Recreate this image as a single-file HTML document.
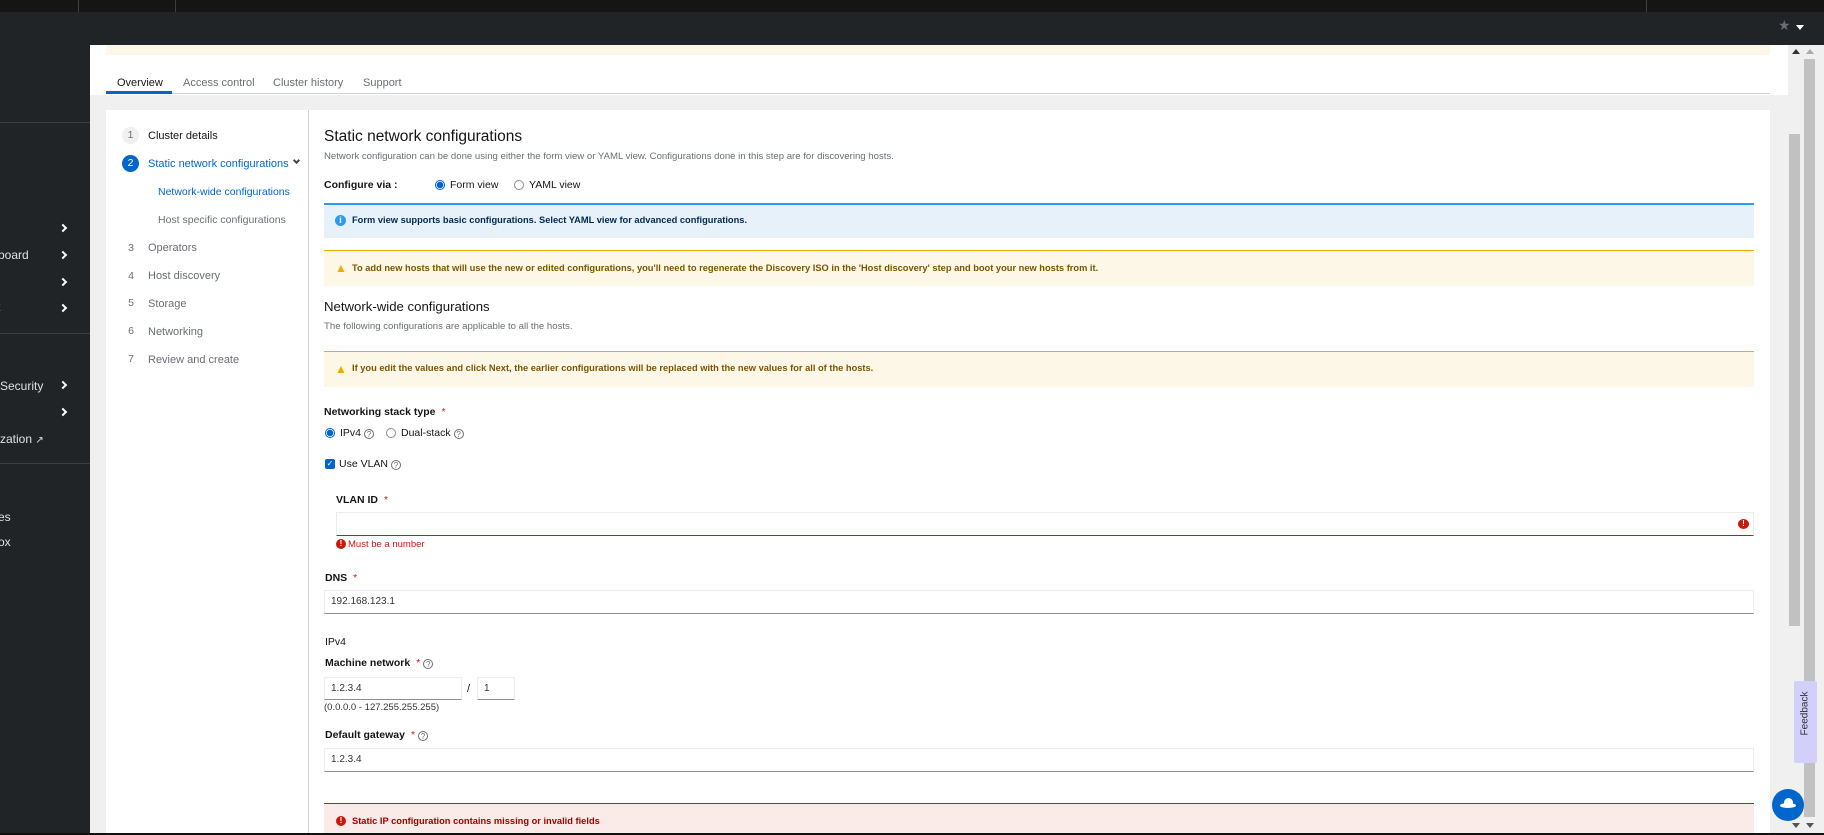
<!DOCTYPE html>
<html><head><meta charset="utf-8">
<style>
*{box-sizing:border-box;margin:0;padding:0}
body{width:1824px;height:835px;overflow:hidden;background:#f0f0f0;font-family:"Liberation Sans",sans-serif;color:#151515;position:relative;font-size:12px}
.a{position:absolute;white-space:nowrap}
.chev{position:absolute;width:6px;height:6px;border-right:2px solid #fff;border-bottom:2px solid #fff;transform:rotate(-45deg)}
.radio{position:absolute;width:10px;height:10px;border-radius:50%;border:1px solid #8a8d90;background:#fff}
.radio.on{border:1px solid #06c;background:radial-gradient(#06c 0 3px,#fff 3.5px)}
.q{display:inline-block;width:10px;height:10px;border:1px solid #6a6e73;border-radius:50%;font-size:8px;line-height:9px;text-align:center;color:#6a6e73;vertical-align:-1px;margin-left:3px;font-weight:normal}
.inp{position:absolute;background:#fff;border:1px solid #ececec;border-bottom:1px solid #8a8d90;font-size:12px;padding-left:6px}
.lbl{position:absolute;font-size:10.5px;font-weight:bold;white-space:nowrap}
.req{color:#c9190b;margin-left:6px;font-weight:normal}
.alert{position:absolute;left:324px;width:1430px}
.nn{position:absolute;left:122px;width:18px;text-align:center;color:#6a6e73;font-size:10.5px}
.nt{position:absolute;left:148px;color:#6a6e73;font-size:11px}
.at{position:absolute;left:352px;font-size:9.3px;font-weight:bold;white-space:nowrap}
</style></head><body>
<div class="a" style="left:0;top:0;width:1824px;height:12px;background:#151515"></div>
<div class="a" style="left:78px;top:0;width:1px;height:12px;background:#3c3f42"></div>
<div class="a" style="left:175px;top:0;width:1px;height:12px;background:#3c3f42"></div>
<div class="a" style="left:1646px;top:0;width:1px;height:12px;background:#3c3f42"></div>
<div class="a" style="left:0;top:12px;width:1824px;height:33px;background:#212427"></div>
<div class="a" style="left:1778px;top:17px;color:#6a6e73;font-size:14px">★</div>
<div class="a" style="left:1796px;top:25px;width:0;height:0;border-left:4px solid transparent;border-right:4px solid transparent;border-top:5px solid #fff"></div>
<div class="a" style="left:0;top:45px;width:90px;height:788px;background:#212427"></div>
<div class="a" style="left:0;top:122px;width:90px;height:1px;background:#3c3f42"></div>
<div class="a" style="left:0;top:333px;width:90px;height:1px;background:#3c3f42"></div>
<div class="a" style="left:0;top:463px;width:90px;height:1px;background:#3c3f42"></div>
<div class="chev" style="left:60px;top:225px"></div>
<div class="chev" style="left:60px;top:252px"></div>
<div class="chev" style="left:60px;top:279px"></div>
<div class="chev" style="left:60px;top:305px"></div>
<div class="chev" style="left:60px;top:382px"></div>
<div class="chev" style="left:60px;top:409px"></div>
<div class="a" style="left:-2px;top:248px;color:#e0e0e0;font-size:12px">board</div>
<div class="a" style="left:-3px;top:300px;color:#e0e0e0;font-size:12px">t</div>
<div class="a" style="left:0;top:379px;color:#e0e0e0;font-size:12px">Security</div>
<div class="a" style="left:0;top:432px;color:#e0e0e0;font-size:12px">zation <span style="font-size:10px">↗</span></div>
<div class="a" style="left:-2px;top:510px;color:#e0e0e0;font-size:12px">es</div>
<div class="a" style="left:-2px;top:535px;color:#e0e0e0;font-size:12px">ox</div>
<div class="a" style="left:90px;top:45px;width:1698px;height:50px;background:#fff"></div>
<div class="a" style="left:106px;top:45px;width:1664px;height:10px;background:#fdf7e7"></div>
<div class="a" style="left:106px;top:93px;width:1664px;height:1px;background:#d2d2d2"></div>
<div class="a" style="left:106px;top:91px;width:66px;height:3px;background:#06c"></div>
<div class="a" style="left:117px;top:77px;font-size:11px">Overview</div>
<div class="a" style="left:183px;top:77px;font-size:11px;color:#6a6e73">Access control</div>
<div class="a" style="left:273px;top:77px;font-size:11px;color:#6a6e73">Cluster history</div>
<div class="a" style="left:363px;top:77px;font-size:11px;color:#6a6e73">Support</div>
<div class="a" style="left:106px;top:110px;width:1664px;height:723px;background:#fff"></div>
<div class="a" style="left:308px;top:110px;width:1px;height:723px;background:#d2d2d2"></div>
<div class="a" style="left:122px;top:127px;width:17px;height:17px;border-radius:50%;background:#f0f0f0"></div>
<div class="nn" style="top:129px;left:122px;width:17px">1</div>
<div class="nt" style="top:130px;color:#151515">Cluster details</div>
<div class="a" style="left:122px;top:155px;width:17px;height:17px;border-radius:50%;background:#06c"></div>
<div class="nn" style="top:157px;left:122px;width:17px;color:#fff">2</div>
<div class="nt" style="top:158px;color:#06c">Static network configurations</div>
<div class="a" style="left:294px;top:158px;width:5px;height:5px;border-right:2px solid #444;border-bottom:2px solid #444;transform:rotate(45deg)"></div>
<div class="nt" style="top:186px;left:158px;color:#06c;font-size:10.5px">Network-wide configurations</div>
<div class="nt" style="top:214px;left:158px;font-size:10.5px">Host specific configurations</div>
<div class="nn" style="top:242px">3</div><div class="nt" style="top:242px">Operators</div>
<div class="nn" style="top:270px">4</div><div class="nt" style="top:270px">Host discovery</div>
<div class="nn" style="top:297px">5</div><div class="nt" style="top:298px">Storage</div>
<div class="nn" style="top:325px">6</div><div class="nt" style="top:326px">Networking</div>
<div class="nn" style="top:353px">7</div><div class="nt" style="top:354px">Review and create</div>
<div class="a" style="left:324px;top:128px;font-size:15.5px">Static network configurations</div>
<div class="a" style="left:324px;top:151px;font-size:9.6px;color:#6a6e73">Network configuration can be done using either the form view or YAML view. Configurations done in this step are for discovering hosts.</div>
<div class="lbl" style="left:324px;top:179px;font-size:10.5px">Configure via :</div>
<div class="radio on" style="left:435px;top:180px"></div>
<div class="a" style="left:450px;top:179px;font-size:10.5px">Form view</div>
<div class="radio" style="left:514px;top:180px"></div>
<div class="a" style="left:529px;top:179px;font-size:10.5px">YAML view</div>
<div class="alert" style="top:203px;height:35px;background:#e7f1fa;border-top:2px solid #2b9af3"></div>
<div class="a" style="left:335px;top:215px;width:11px;height:11px;border-radius:50%;background:#2b9af3;color:#fff;font-size:9px;text-align:center;line-height:11px;font-weight:bold">i</div>
<div class="at" style="top:215px;color:#002952">Form view supports basic configurations. Select YAML view for advanced configurations.</div>
<div class="alert" style="top:250px;height:36px;background:#fdf7e7;border-top:1px solid #f0ab00"></div>
<div class="a" style="left:335px;top:261px;color:#f0ab00;font-size:12px">▲</div>
<div class="at" style="top:263px;color:#795600">To add new hosts that will use the new or edited configurations, you'll need to regenerate the Discovery ISO in the 'Host discovery' step and boot your new hosts from it.</div>
<div class="a" style="left:324px;top:299px;font-size:13.2px">Network-wide configurations</div>
<div class="a" style="left:324px;top:321px;font-size:9.6px;color:#6a6e73">The following configurations are applicable to all the hosts.</div>
<div class="alert" style="top:351px;height:36px;background:#fdf7e7;border-top:1px solid #f0ab00"></div>
<div class="a" style="left:335px;top:362px;color:#f0ab00;font-size:12px">▲</div>
<div class="at" style="top:363px;color:#795600">If you edit the values and click Next, the earlier configurations will be replaced with the new values for all of the hosts.</div>
<div class="lbl" style="left:324px;top:406px">Networking stack type<span class="req">*</span></div>
<div class="radio on" style="left:325px;top:428px"></div>
<div class="a" style="left:340px;top:427px;font-size:10.5px">IPv4<span class="q">?</span></div>
<div class="radio" style="left:386px;top:428px"></div>
<div class="a" style="left:401px;top:427px;font-size:10.5px">Dual-stack<span class="q">?</span></div>
<div class="a" style="left:325px;top:459px;width:10px;height:10px;background:#06c;border-radius:2px;color:#fff;font-size:8px;line-height:10px;text-align:center">✓</div>
<div class="a" style="left:339px;top:458px;font-size:10.5px">Use VLAN<span class="q">?</span></div>
<div class="lbl" style="left:336px;top:494px">VLAN ID<span class="req">*</span></div>
<div class="inp" style="left:336px;top:512px;width:1418px;height:24px;border-bottom:1px solid #c9190b"></div>
<div class="a" style="left:1738px;top:519px;width:11px;height:10px;border-radius:50%;background:#c9190b;color:#fff;font-size:8px;text-align:center;line-height:10px;font-weight:bold">!</div>
<div class="a" style="left:336px;top:539px;width:10px;height:10px;border-radius:50%;background:#c9190b;color:#fff;font-size:8px;text-align:center;line-height:10px;font-weight:bold">!</div>
<div class="a" style="left:348px;top:539px;font-size:9.5px;color:#c9190b">Must be a number</div>
<div class="lbl" style="left:325px;top:572px">DNS<span class="req">*</span></div>
<div class="inp" style="left:324px;top:590px;width:1430px;height:24px;line-height:22px;font-size:10px;color:#333;border-bottom-color:#8a8d90">192.168.123.1</div>
<div class="lbl" style="left:325px;top:636px;font-weight:normal">IPv4</div>
<div class="lbl" style="left:325px;top:657px">Machine network<span class="req">*</span><span class="q">?</span></div>
<div class="inp" style="left:324px;top:677px;width:138px;height:23px;line-height:21px;font-size:10px;color:#333">1.2.3.4</div>
<div class="a" style="left:467px;top:683px;font-size:11px">/</div>
<div class="inp" style="left:477px;top:677px;width:38px;height:23px;line-height:21px;font-size:10px;color:#333">1</div>
<div class="a" style="left:324px;top:702px;font-size:9.5px;color:#333">(0.0.0.0 - 127.255.255.255)</div>
<div class="lbl" style="left:325px;top:729px">Default gateway<span class="req">*</span><span class="q">?</span></div>
<div class="inp" style="left:324px;top:748px;width:1430px;height:24px;line-height:22px;font-size:10px;color:#333">1.2.3.4</div>
<div class="alert" style="top:803px;height:30px;background:#faeae8;border-top:1px solid #c9190b"></div>
<div class="a" style="left:336px;top:816px;width:10px;height:10px;border-radius:50%;background:#c9190b;color:#fff;font-size:8px;text-align:center;line-height:10px;font-weight:bold">!</div>
<div class="at" style="top:816px;color:#a30000">Static IP configuration contains missing or invalid fields</div>
<div class="a" style="left:1771px;top:95px;width:17px;height:738px;background:#f0f0f0"></div>
<div class="a" style="left:1788px;top:45px;width:36px;height:788px;background:#f0f0f0"></div>
<div class="a" style="left:1792px;top:49px;width:0;height:0;border-left:4px solid transparent;border-right:4px solid transparent;border-bottom:5px solid #333"></div>
<div class="a" style="left:1806px;top:49px;width:0;height:0;border-left:4px solid transparent;border-right:4px solid transparent;border-bottom:5px solid #aaa"></div>
<div class="a" style="left:1789px;top:134px;width:11px;height:492px;background:#c1c1c1"></div>
<div class="a" style="left:1804px;top:59px;width:11px;height:758px;background:#c1c1c1"></div>
<div class="a" style="left:1792px;top:823px;width:0;height:0;border-left:4px solid transparent;border-right:4px solid transparent;border-top:5px solid #555"></div>
<div class="a" style="left:1806px;top:823px;width:0;height:0;border-left:4px solid transparent;border-right:4px solid transparent;border-top:5px solid #555"></div>
<div class="a" style="left:1794px;top:681px;width:23px;height:82px;background:#d2cffa;border-radius:2px"></div>
<div class="a" style="left:1778px;top:708px;width:54px;font-size:10px;color:#333;transform:rotate(-90deg);text-align:center">Feedback</div>
<div class="a" style="left:1772px;top:789px;width:32px;height:32px;border-radius:50%;background:#06c"></div>
<div class="a" style="left:1780px;top:803px;width:16px;height:5px;border-radius:50%;background:#fff"></div>
<div class="a" style="left:1784px;top:798px;width:9px;height:8px;border-radius:5px 5px 1px 1px;background:#fff"></div>
<div class="a" style="left:0;top:833px;width:1824px;height:2px;background:#111"></div>
</body></html>
